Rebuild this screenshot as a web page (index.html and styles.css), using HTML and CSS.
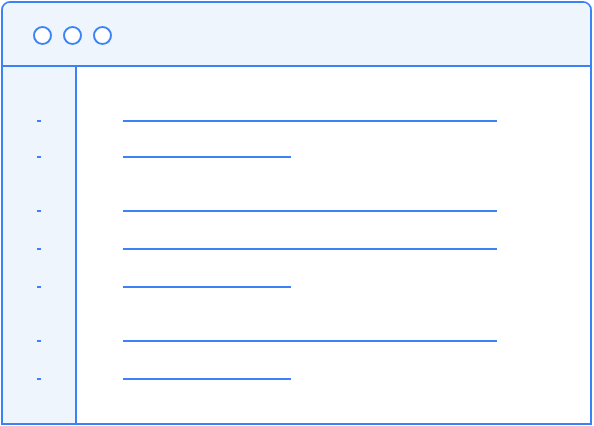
FILE: index.html
```html
<!DOCTYPE html>
<html lang="en">
<head>
<meta charset="utf-8">
<title>Window wireframe</title>
<link rel="stylesheet" href="styles.css">
</head>
<body>
<div class="window">
  <div class="titlebar">
    <span class="dot"></span>
    <span class="dot"></span>
    <span class="dot"></span>
  </div>
  <div class="content">
    <div class="sidebar">
      <div class="group group-tight">
        <span class="dash"></span>
        <span class="dash"></span>
      </div>
      <div class="group">
        <span class="dash"></span>
        <span class="dash"></span>
        <span class="dash"></span>
      </div>
      <div class="group">
        <span class="dash"></span>
        <span class="dash"></span>
      </div>
    </div>
    <div class="main">
      <div class="group group-tight">
        <span class="line line-long"></span>
        <span class="line line-short"></span>
      </div>
      <div class="group">
        <span class="line line-long"></span>
        <span class="line line-long"></span>
        <span class="line line-short"></span>
      </div>
      <div class="group">
        <span class="line line-long"></span>
        <span class="line line-short"></span>
      </div>
    </div>
  </div>
</div>
</body>
</html>
```

FILE: styles.css
```css
* { box-sizing: border-box; }

html, body {
  margin: 0;
  padding: 0;
  background: #ffffff;
}

body {
  width: 594px;
  height: 426px;
  padding: 1px 0 0 1px;
}

.window {
  width: 591px;
  height: 424px;
  border: 2px solid #3b82f6;
  border-radius: 9px 9px 0 0;
  display: flex;
  flex-direction: column;
  overflow: hidden;
  background: #ffffff;
}

.titlebar {
  height: 64px;
  flex: none;
  background: #eff5fd;
  border-bottom: 2px solid #3b82f6;
  display: flex;
  align-items: flex-start;
  gap: 11px;
  padding: 23px 0 0 30px;
}

.dot {
  width: 19px;
  height: 19px;
  border: 2px solid #3b82f6;
  border-radius: 50%;
  background: #ffffff;
}

.content {
  flex: 1;
  display: flex;
}

.sidebar {
  width: 74px;
  flex: none;
  background: #eff5fd;
  border-right: 2px solid #3b82f6;
  padding: 53px 0 0 34px;
  display: flex;
  flex-direction: column;
  gap: 52px;
}

.main {
  flex: 1;
  padding: 53px 0 0 46px;
  display: flex;
  flex-direction: column;
  gap: 52px;
}

.group {
  display: flex;
  flex-direction: column;
  gap: 36px;
}

.group-tight {
  gap: 34px;
}

.dash {
  display: block;
  width: 4px;
  height: 2px;
  background: #3b82f6;
}

.line {
  display: block;
  height: 2px;
  background: #3b82f6;
}

.line-long { width: 374px; }
.line-short { width: 168px; }
```
